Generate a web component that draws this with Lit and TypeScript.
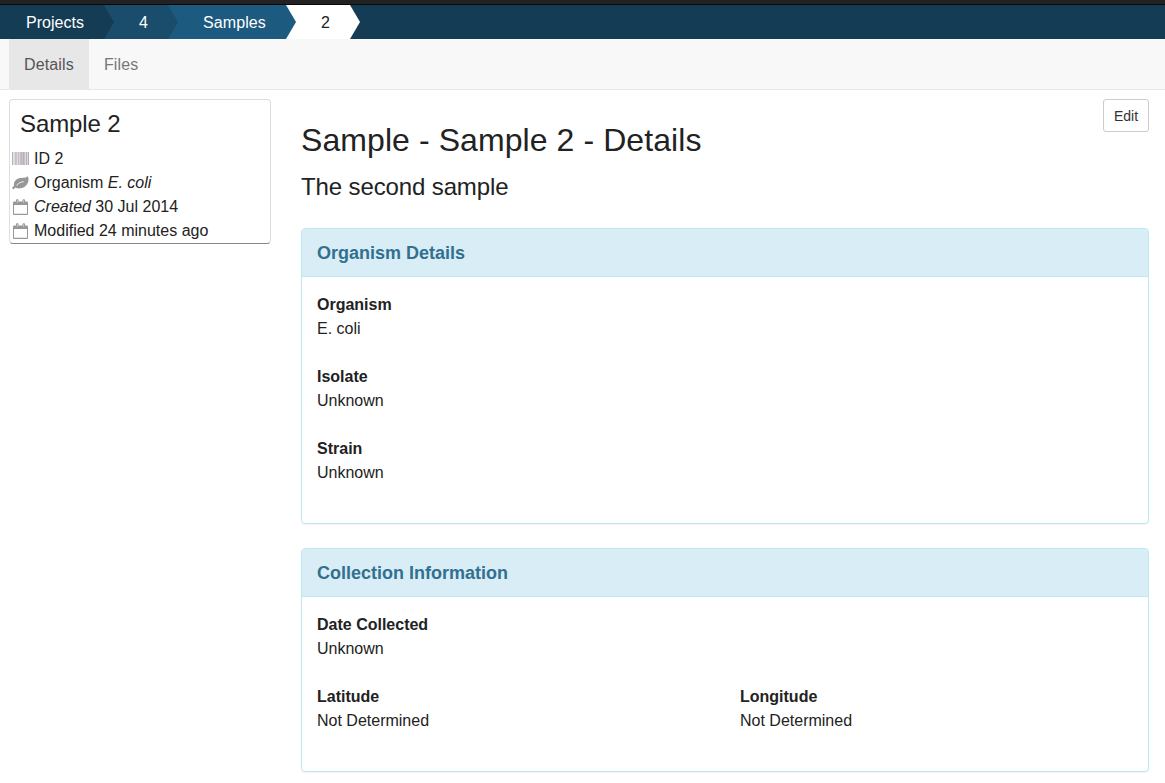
import { LitElement, html, css, svg } from "lit";
import { customElement, property } from "lit/decorators.js";

const barcodeIcon = svg`
  <path fill="#dcdcdf" d="M0 1h17v13H0z"/>
  <path fill="#b3b3bc" d="M0 1h1v13H0z"/>
  <path fill="#eae2e0" d="M1 1h1v13H1z"/>
  <path fill="#c3bfd4" d="M3 1h1v13H3z"/>
  <path fill="#cfc3c8" d="M4 1h1v13H4z"/>
  <path fill="#c4bfcd" d="M6 1h1v13H6z"/>
  <path fill="#d9d3e2" d="M7 1h1v13H7z"/>
  <path fill="#cdbabd" d="M8 1h1v13H8z"/>
  <path fill="#bdbacd" d="M9 1h1v13H9z"/>
  <path fill="#cdc1bf" d="M10 1h1v13h-1z"/>
  <path fill="#bcb0b2" d="M11 1h1v13h-1z"/>
  <path fill="#bcc3d6" d="M12 1h1v13h-1z"/>
  <path fill="#b9b0b4" d="M14 1h1v13h-1z"/>
  <path fill="#adabb9" d="M16 1h1v13h-1z"/>`;

const leafIcon = svg`
  <path fill="#979797" d="M15.500 1.300C14.700 2.500 13 2.700 10.500 2.800C5.600 3 2.200 5.300 1.900 8.900C1.800 9.800 2 10.300 1.900 10.900C1.300 11.600.2 12.300.2 13.100C.3 13.800.8 14.300 1.400 14.200C2.300 14 2.700 13 3.500 12.600C5 13.700 8 13.900 10.600 12.800C14.600 11.100 16.900 7 16.500 3.900C16.400 2.800 16 1.800 15.500 1.300Z"/>
  <path fill="none" stroke="#fff" stroke-width=".85" stroke-linecap="round" d="M4.800 10.200C6.600 8 8.400 7.100 11.400 6.700"/>`;

const calendarIcon = svg`
  <path fill="#979797" fill-rule="evenodd" d="M2.500 2.500H4V1.600C4 .7 4.400.2 5.200.2s1.300.5 1.300 1.400v.9h4v-.9c0-.9.500-1.400 1.300-1.400s1.200.5 1.200 1.400v.9h1.500c.8 0 1.500.5 1.500 1.300V15c0 .7-.5 1-1 1H2c-.5 0-1-.3-1-1V3.800c0-.8.700-1.300 1.500-1.300zM2 6v8.800h13V6z"/>
  <path fill="#d8dcea" d="M4.900 1.200h.7v2.700h-.7zM11.400 1.200h.7v2.700h-.7z"/>`;

const icons = { barcode: barcodeIcon, leaf: leafIcon, calendar: calendarIcon };

@customElement("info-panel")
class InfoPanel extends LitElement {
  @property() heading = "";
  @property({ attribute: false }) rows: [string, string][][] = [];

  static styles = css`
    :host {
      display: block;
      margin-bottom: 24px;
      border: 1px solid #bce8f1;
      border-radius: 4px;
      background: #fff;
      box-shadow: 0 1px 1px rgba(0, 0, 0, 0.05);
    }
    .heading {
      height: 47px;
      box-sizing: content-box;
      padding: 0 15px;
      border-bottom: 1px solid #bce8f1;
      border-radius: 3px 3px 0 0;
      background: #d9edf7;
      color: #31708f;
      font-size: 18px;
      font-weight: 700;
      line-height: 48px;
    }
    .body {
      padding: 16px 15px 14px;
    }
    .row {
      display: grid;
      grid-template-columns: 1fr 1fr;
      column-gap: 30px;
      margin-bottom: 24px;
    }
    .label {
      font-weight: 700;
    }
  `;

  render() {
    return html`
      <div class="heading">${this.heading}</div>
      <div class="body">
        ${this.rows.map(
          (row) => html`<div class="row">
            ${row.map(
              ([label, value]) => html`<div>
                <div class="label">${label}</div>
                <div>${value}</div>
              </div>`
            )}
          </div>`
        )}
      </div>
    `;
  }
}

@customElement("app-root")
class AppRoot extends LitElement {
  static styles = css`
    :host {
      display: block;
      height: 783px;
      overflow: hidden;
      background: #fff;
      color: #222;
      font: 16px/24px "Liberation Sans", Arial, sans-serif;
    }
    .strip {
      height: 4px;
      background: #222;
      border-bottom: 1px solid #080808;
    }
    .crumbs {
      display: flex;
      height: 34px;
      background: #153c55;
      line-height: 35px;
      color: #fff;
    }
    .crumb {
      box-sizing: border-box;
      margin-right: -10px;
      text-align: center;
      clip-path: polygon(0 0, calc(100% - 10px) 0, 100% 50%, calc(100% - 10px) 100%, 0 100%);
    }
    .c1 { width: 114px; padding-right: 4px; background: #153c55; z-index: 4; }
    .c2 { width: 74px; padding-left: 5px; background: #194d6b; z-index: 3; }
    .c3 { width: 128px; padding-left: 5px; background: #1d5a80; z-index: 2; letter-spacing: 0.1px; }
    .c4 { width: 74px; padding-left: 5px; background: #fff; color: #222; z-index: 1; }
    .tabs {
      display: flex;
      height: 50px;
      padding-left: 9px;
      border-bottom: 1px solid #e7e7e7;
      background: #f8f8f8;
      line-height: 52px;
      color: #777;
      letter-spacing: 0.14px;
    }
    .tab { height: 50px; padding: 0 15px; }
    .active { background: #e7e7e7; color: #555; }
    .page {
      display: grid;
      grid-template-columns: 262px 848px;
      column-gap: 30px;
      align-items: start;
      padding: 9px 0 0 9px;
    }
    .card {
      box-sizing: border-box;
      height: 145px;
      border: 1px solid #ddd;
      border-bottom-color: #888;
      border-radius: 4px;
    }
    .name {
      padding: 9px 10px 8px;
      font-size: 24px;
      line-height: 30px;
      letter-spacing: -0.1px;
    }
    .fact {
      display: flex;
      align-items: center;
      gap: 5px;
      height: 24px;
      padding-left: 2px;
    }
    .icon { flex: none; width: 17px; height: 16px; }
    .title-row {
      display: flex;
      justify-content: space-between;
      align-items: flex-start;
    }
    h1 {
      margin: 23px 0 0;
      font-size: 32px;
      font-weight: 400;
      line-height: 37px;
      letter-spacing: 0.08px;
    }
    h2 {
      margin: 13px 0 27px;
      font-size: 24px;
      font-weight: 400;
      line-height: 29px;
      letter-spacing: -0.12px;
    }
    .edit {
      box-sizing: border-box;
      width: 46px;
      height: 33px;
      padding: 1px 0 0;
      border: 1px solid #ccc;
      border-radius: 3px;
      background: #fff;
      color: #333;
      font: 14px/30px "Liberation Sans", Arial, sans-serif;
    }
  `;

  private fact(icon: keyof typeof icons, text: unknown) {
    return html`<div class="fact">
      <svg class="icon" viewBox="0 0 17 16">${icons[icon]}</svg>
      <span>${text}</span>
    </div>`;
  }

  render() {
    return html`
      <div class="strip"></div>
      <nav class="crumbs">
        <div class="crumb c1">Projects</div>
        <div class="crumb c2">4</div>
        <div class="crumb c3">Samples</div>
        <div class="crumb c4">2</div>
      </nav>
      <nav class="tabs">
        <div class="tab active">Details</div>
        <div class="tab">Files</div>
      </nav>
      <div class="page">
        <aside class="card">
          <div class="name">Sample 2</div>
          ${this.fact("barcode", "ID 2")}
          ${this.fact("leaf", html`Organism <i>E. coli</i>`)}
          ${this.fact("calendar", html`<i>Created</i> 30 Jul 2014`)}
          ${this.fact("calendar", "Modified 24 minutes ago")}
        </aside>
        <main>
          <div class="title-row">
            <h1>Sample - Sample 2 - Details</h1>
            <button class="edit">Edit</button>
          </div>
          <h2>The second sample</h2>
          <info-panel
            heading="Organism Details"
            .rows=${[[["Organism", "E. coli"]], [["Isolate", "Unknown"]], [["Strain", "Unknown"]]]}
          ></info-panel>
          <info-panel
            heading="Collection Information"
            .rows=${[
              [["Date Collected", "Unknown"]],
              [["Latitude", "Not Determined"], ["Longitude", "Not Determined"]],
            ]}
          ></info-panel>
        </main>
      </div>
    `;
  }
}
